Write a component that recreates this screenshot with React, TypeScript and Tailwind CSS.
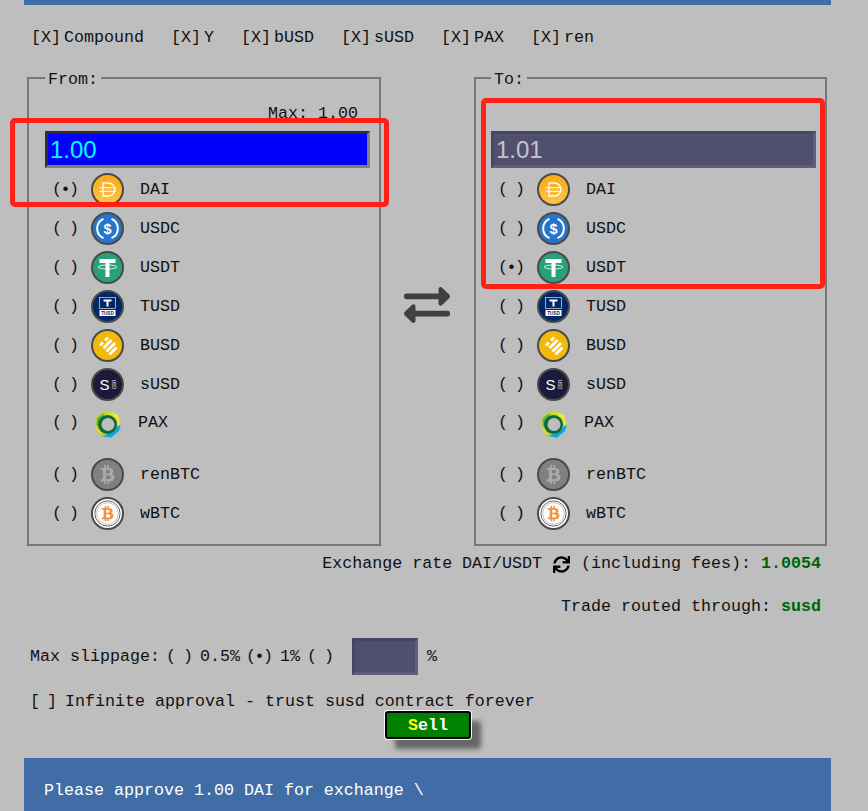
import type { ReactNode } from "react";
import { FaBtc, FaExchangeAlt, FaSync } from "react-icons/fa";

const mono = "font-['Liberation_Mono',monospace] text-[16.67px] leading-[20px] text-[#111]";

// Coin shell: dark ring around a 33px circle
function Coin({ fill, children }: { fill: string; children: ReactNode }) {
  return (
    <svg width="33" height="33" viewBox="0 0 33 33" className="shrink-0">
      <defs>
        <linearGradient id="dai" x1="0" y1="0" x2="0" y2="1">
          <stop offset="0" stopColor="#f9a913" />
          <stop offset="1" stopColor="#fdc446" />
        </linearGradient>
      </defs>
      <circle cx="16.5" cy="16.5" r="15.5" fill={fill} stroke="#4a4a4a" strokeWidth="2" />
      {children}
    </svg>
  );
}

const icons: Record<string, ReactNode> = {
  DAI: (
    <Coin fill="url(#dai)">
      <g fill="none" stroke="#fff" strokeWidth="1.4">
        <path d="M12 10h5.5a6.5 6.5 0 0 1 0 13H12z" />
        <path d="M8.5 14.8h16M8.5 18.2h16" strokeWidth="1.1" />
      </g>
    </Coin>
  ),
  USDC: (
    <Coin fill="#2775ca">
      <g fill="none" stroke="#fff" strokeWidth="2">
        <path d="M12.5 6.8a10.6 10.6 0 0 0 0 19.4" />
        <path d="M20.5 6.8a10.6 10.6 0 0 1 0 19.4" />
      </g>
      <text x="16.5" y="21.5" textAnchor="middle" fill="#fff" fontSize="14.5" fontWeight="700" fontFamily="Liberation Sans">$</text>
    </Coin>
  ),
  USDT: (
    <Coin fill="#26a17b">
      <path d="M8.5 8h16v4h-6v14h-4V12h-6z" fill="#fff" />
      <ellipse cx="16.5" cy="16" rx="9.5" ry="2" fill="none" stroke="#fff" strokeWidth="0.8" />
    </Coin>
  ),
  TUSD: (
    <Coin fill="#002868">
      <rect x="8.5" y="7.5" width="16" height="11" fill="none" stroke="#fff" strokeWidth="0.6" />
      <path d="M12.5 9.5h8v2h-3v5h-2v-5h-3z" fill="#fff" />
      <rect x="8.5" y="20" width="16" height="6" fill="#fff" />
      <text x="16.5" y="25" textAnchor="middle" fill="#002868" fontSize="4.6" fontWeight="700" fontFamily="Liberation Sans">TUSD</text>
    </Coin>
  ),
  BUSD: (
    <Coin fill="#f0b90b">
      <g fill="none" stroke="#fff" strokeWidth="2.8">
        <path d="M14 11.5L17 8.5" />
        <path d="M9 16.5L12 13.5" />
        <path d="M12.5 19L20.5 11" />
        <path d="M15.5 22.5L24 14" />
        <path d="M18.5 25.5L25.5 18.5" />
      </g>
    </Coin>
  ),
  sUSD: (
    <Coin fill="#1c1a3a">
      <text x="13.5" y="22" textAnchor="middle" fill="#fff" fontSize="15" fontFamily="Liberation Sans">S</text>
      <text x="0" y="0" textAnchor="middle" fill="#fff" fontSize="4.6" fontFamily="Liberation Sans" transform="translate(21 16.5) rotate(90)">USD</text>
    </Coin>
  ),
  renBTC: (
    <Coin fill="#808080">
      <g transform="translate(7 7)" className="text-[#a9a9a9]">
        <FaBtc size={19} />
      </g>
    </Coin>
  ),
  wBTC: (
    <Coin fill="#fff">
      <circle cx="16.5" cy="16.5" r="12.6" fill="none" stroke="#666" strokeWidth="1" />
      <circle cx="16.5" cy="16.5" r="10.8" fill="none" stroke="#999" strokeWidth="0.6" />
      <g transform="translate(8.5 8.5)" className="text-[#f09242]">
        <FaBtc size={16} />
      </g>
    </Coin>
  ),
};

function PaxIcon() {
  return (
    <svg width="27" height="29" viewBox="0 0 27 29" className="shrink-0">
      <defs>
        <linearGradient id="pax" x1="0" y1="0" x2="1" y2="1">
          <stop offset="0" stopColor="#b5d334" />
          <stop offset="0.5" stopColor="#d8dc2c" />
          <stop offset="1" stopColor="#00a3e0" />
        </linearGradient>
      </defs>
      <path d="M9 2L14 0.5L24 5L26.5 18L17 27.5L7 27L1 17L2 8z" fill="url(#pax)" />
      <path d="M16 2L24 5L26.5 15L24 17L22 8z" fill="#f4e73b" />
      <path d="M26.5 14L25 21L17 27.5L9 26L19 22z" fill="#0aa6e4" />
      <path d="M3 8L10 3L8 12L6 20L2.5 15z" fill="#5fb53a" />
      <ellipse cx="13.5" cy="14.5" rx="9.5" ry="9.5" fill="#0f6b3a" />
      <ellipse cx="14" cy="14.5" rx="6.5" ry="6.5" fill="#bebebe" />
    </svg>
  );
}

const coins = ["DAI", "USDC", "USDT", "TUSD", "BUSD", "sUSD", "PAX", "renBTC", "wBTC"];

function Radio({ on, className = "" }: { on?: boolean; className?: string }) {
  return (
    <span className={`inline-block w-[30px] whitespace-pre tracking-[-1.5px] ${className}`}>
      {on ? "(•)" : "( )"}
    </span>
  );
}

function CoinRow({ name, selected }: { name: string; selected: boolean }) {
  const pax = name === "PAX";
  return (
    <div className={`flex items-center ${pax ? "mb-[13px] h-[38px]" : "h-[39px]"}`}>
      <span className={`${mono} w-[39px]`}>
        <Radio on={selected} />
      </span>
      {pax ? (
        <div className="ml-[3px] mt-[3px] w-[28px]">
          <PaxIcon />
        </div>
      ) : (
        icons[name]
      )}
      <span className={`${mono} ml-[16px]`}>{name}</span>
    </div>
  );
}

function CoinBox({ title, max, value, active, selected, box }: {
  title: string;
  max?: string;
  value: string;
  active?: boolean;
  selected: string;
  box: string;
}) {
  return (
    <fieldset className={`${box} h-[480px] border-2 border-[#777] pr-[9px]`}>
      <legend className={`${mono} px-[3px] pt-[4px]`}>{title}</legend>
      <div className={`${mono} h-[26px] pr-[12px] pt-[14px] text-right`}>{max ?? ""}</div>
      <input
        readOnly
        value={value}
        className={
          active
            ? "mt-[15px] block h-[37px] w-full border-[3px] border-t-[#2f2f2f] border-l-[#2f2f2f] border-r-[#808080] border-b-[#808080] bg-[#0000ff] px-[2px] font-['Liberation_Sans',sans-serif] text-[24px] text-[#00ffff] outline-none"
            : "mt-[15px] block h-[37px] w-full border-[3px] border-t-[#464662] border-l-[#464662] border-r-[#5f5f7c] border-b-[#5f5f7c] bg-[#50506e] px-[2px] font-['Liberation_Sans',sans-serif] text-[24px] text-[#c4c4cc] outline-none"
        }
      />
      <div className="mt-[2px] pl-[7px]">
        {coins.map((c) => (
          <CoinRow key={c} name={c} selected={c === selected} />
        ))}
      </div>
    </fieldset>
  );
}

export default function App() {
  return (
    <div className="relative h-[811px] w-[868px] overflow-hidden bg-[#bebebe]">
      <div className="ml-[24px] h-[5px] w-[807px] bg-[#406da5]" />

      {/* Pools */}
      <div className={`${mono} ml-[31px] mt-[23px] flex gap-[27px]`}>
        {["Compound", "Y", "bUSD", "sUSD", "PAX", "ren"].map((p) => (
          <span key={p} className="flex">
            <span>[X]</span>
            <span className="ml-[3px]">{p}</span>
          </span>
        ))}
      </div>

      {/* From / To */}
      <div className="ml-[27px] mt-[18px] flex w-[800px]">
        <CoinBox title="From:" max="Max: 1.00" value="1.00" active selected="DAI" box="w-[354px] pl-[16px]" />
        <div className="flex flex-1 items-center justify-center pb-[2px] pr-[1px]">
          <FaExchangeAlt size={46} className="text-[#404040]" />
        </div>
        <CoinBox title="To:" value="1.01" selected="USDT" box="w-[353px] pl-[15px]" />
      </div>

      {/* Rate */}
      <div className={`${mono} mr-[47px] mt-[8px] flex items-center justify-end whitespace-pre`}>
        <span>Exchange rate DAI/USDT </span>
        <FaSync size={17} className="mx-[1px] text-black" />
        <span> (including fees): </span>
        <span className="font-bold text-[#006400]">1.0054</span>
      </div>
      <div className={`${mono} mr-[47px] mt-[23px] text-right`}>
        Trade routed through: <span className="font-bold text-[#006400]">susd</span>
      </div>

      {/* Slippage */}
      <div className={`${mono} ml-[30px] mt-[21px] flex items-center whitespace-pre`}>
        <span>Max slippage:</span>
        <Radio className="ml-[6px]" />
        <span className="ml-[4px]">0.5%</span>
        <Radio on className="ml-[6px]" />
        <span className="ml-[4px]">1%</span>
        <Radio className="ml-[7px]" />
        <input
          readOnly
          className="ml-[15px] h-[37px] w-[66px] border-[3px] border-t-[#464662] border-l-[#464662] border-r-[#5f5f7c] border-b-[#5f5f7c] bg-[#50506e] outline-none"
        />
        <span className="ml-[9px]">%</span>
      </div>
      <div className={`${mono} ml-[30px] mt-[17px] flex whitespace-pre`}>
        <span className="w-[35px] tracking-[-1.5px]">[ ]</span>
        <span>Infinite approval - trust susd contract forever</span>
      </div>

      <div className="ml-[385px] mt-[-1px]">
        <button className="flex h-[28px] w-[86px] items-center justify-center rounded-[3px] border-2 border-black bg-[#008000] font-['Liberation_Mono',monospace] text-[16.67px] font-bold text-white shadow-[0_0_0_1px_#fff,10px_10px_5px_#666] outline-none">
          <span className="text-[#ffff00]">S</span>ell
        </button>
      </div>

      {/* Status */}
      <div className={`${mono} ml-[24px] mt-[19px] h-[60px] w-[807px] bg-[#406da5] pl-[20px] pt-[23px] !text-white`}>
        Please approve 1.00 DAI for exchange \
      </div>

      {/* Red annotation boxes */}
      <div className="absolute left-[10px] top-[118px] h-[89px] w-[379px] rounded-[5px] border-[5px] border-[#ff2016]" />
      <div className="absolute left-[481px] top-[98px] h-[191px] w-[344px] rounded-[5px] border-[5px] border-[#ff2016]" />
    </div>
  );
}
